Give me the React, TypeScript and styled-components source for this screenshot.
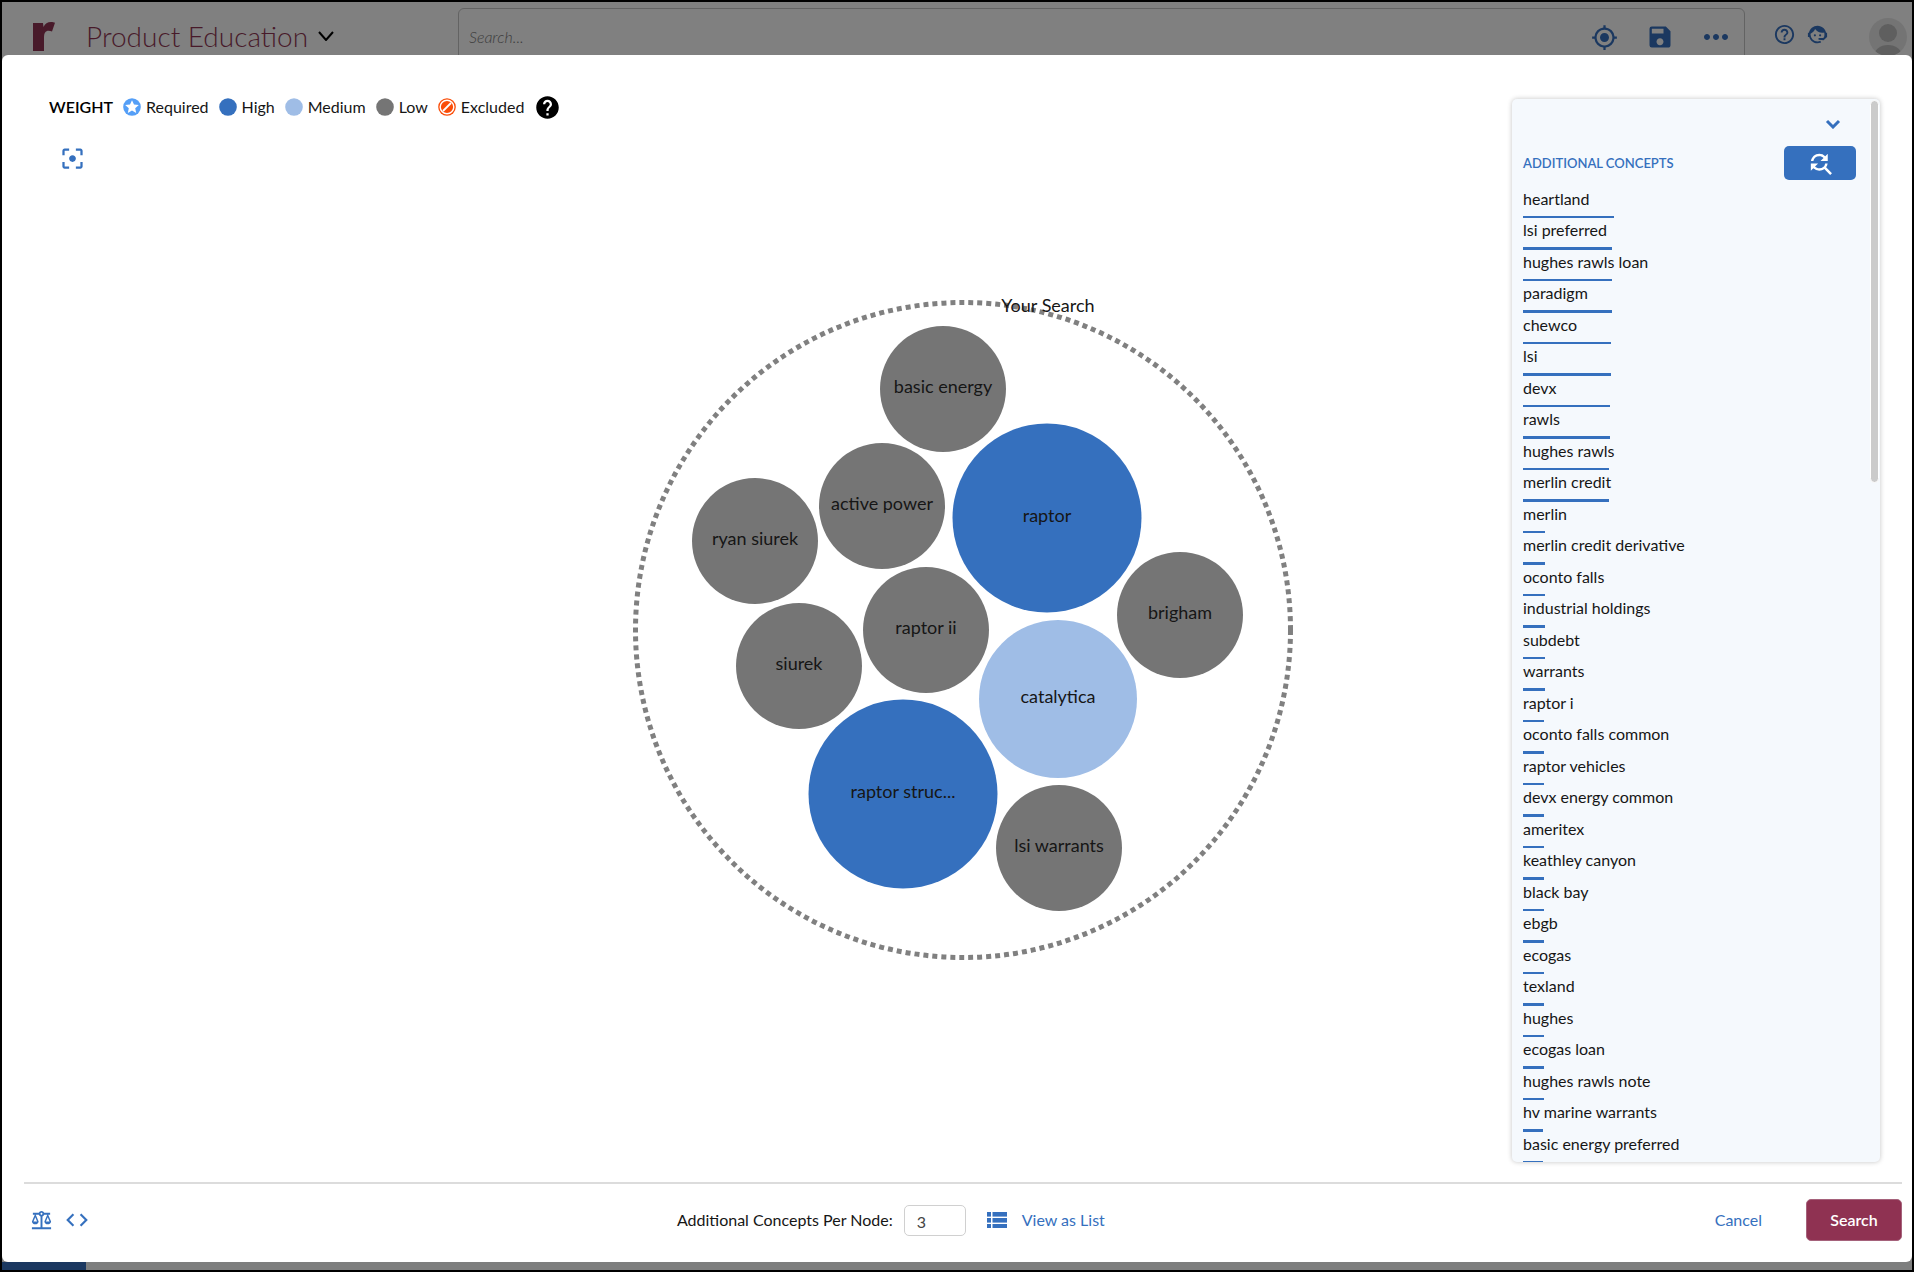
import React, { useState } from "react";
import styled, { createGlobalStyle } from "styled-components";
import {
  MdCode,
  MdFilterCenterFocus,
  MdFindReplace,
  MdHelp,
  MdHelpOutline,
  MdMoreHoriz,
  MdMyLocation,
  MdOutlineBalance,
  MdSave,
} from "react-icons/md";

const color = {
  blue: "#3570be",
  paleBlue: "#9fbde6",
  brightBlue: "#559ff7",
  gray: "#757575",
  orange: "#fa4d09",
  wine: "#8f3252",
  dimWine: "#481a2a",
  navy: "#1b3860",
  ink: "#161616",
};

const GlobalStyle = createGlobalStyle`
  *, *::before, *::after { box-sizing: border-box; }
  body {
    margin: 0;
    font-family: Lato, "Open Sans", sans-serif;
    font-size: 16px;
    line-height: 24px;
    color: ${color.ink};
  }
  button, input { font: inherit; }
`;

const Frame = styled.div`
  display: flex;
  flex-direction: column;
  height: 100vh;
  border: 2px solid #000;
  background: #808080;
  overflow: hidden;
`;

const PlainButton = styled.button`
  display: inline-flex;
  align-items: center;
  justify-content: center;
  padding: 0;
  border: 0;
  background: none;
  color: inherit;
  cursor: pointer;
`;

/* ---------- dimmed page header ---------- */

const Header = styled.header`
  display: flex;
  align-items: flex-start;
  flex: none;
  height: 53px;
  padding: 6px 5px 0 31px;
  overflow: hidden;
  color: ${color.navy};
`;

const Brand = styled.div`
  display: flex;
  align-items: center;
  gap: 31px;
  height: 57px;
  width: 425px;
`;

const TitleButton = styled(PlainButton)`
  gap: 10px;
  padding-bottom: 2px;
  font-size: 28px;
  line-height: 36px;
  font-weight: 300;
  color: ${color.dimWine};
`;

const SearchBox = styled.div`
  display: flex;
  align-items: center;
  flex: 1;
  height: 58px;
  padding: 0 10px;
  border: 1px solid #636363;
  border-radius: 6px;
`;

const SearchInput = styled.input`
  flex: 1;
  min-width: 0;
  padding: 0;
  border: 0;
  outline: 0;
  background: none;
  font-style: italic;
  font-weight: 300;
  &::placeholder {
    color: #3c3c3c;
    opacity: 1;
  }
`;

const SearchActions = styled.div`
  display: flex;
  align-items: center;
  gap: 20px;
`;

const SearchAction = styled(PlainButton)`
  width: 36px;
  height: 36px;
`;

const HeaderTools = styled.div`
  display: flex;
  align-items: center;
  gap: 10px;
  height: 53px;
  padding: 0 40px 0 28px;
`;

const Avatar = styled.div`
  margin-top: 10px;
  width: 38px;
  height: 38px;
  border-radius: 50%;
  background: #747474;
  overflow: hidden;
`;

/* ---------- dialog ---------- */

const Dialog = styled.section`
  display: flex;
  flex-direction: column;
  flex: 1;
  min-height: 0;
  border-radius: 6px;
  background: #fff;
`;

const DialogBody = styled.div`
  display: grid;
  grid-template: minmax(0, 1fr) / minmax(0, 1fr);
  flex: 1;
  min-height: 0;
  padding: 44px 32px 20px 47px;
  & > * {
    grid-area: 1 / 1;
  }
`;

const Toolbar = styled.div`
  display: flex;
  flex-direction: column;
  align-items: flex-start;
  gap: 23px;
  margin-top: -7px;
`;

const Legend = styled.div`
  display: flex;
  align-items: center;
  gap: 10px;
  height: 30px;
`;

const LegendTitle = styled.h2`
  margin: 0;
  font-size: 16px;
  line-height: 24px;
  font-weight: 600;
  color: #000;
`;

const LegendList = styled.ul`
  display: flex;
  gap: 10px;
  margin: 0;
  padding: 0;
  list-style: none;
`;

const LegendItem = styled.li`
  display: flex;
  align-items: center;
  gap: 5px;
`;

const HelpButton = styled(PlainButton)`
  color: #000;
`;

const FocusButton = styled(PlainButton)`
  margin-left: 10px;
  color: ${color.blue};
`;

const Diagram = styled.svg`
  place-self: center;
  font-size: 18px;
  fill: ${color.ink};
`;

/* ---------- concepts panel ---------- */

const Panel = styled.aside`
  justify-self: end;
  position: relative;
  width: 368px;
  min-height: 0;
  border-radius: 5px;
  background: #f5f9fd;
  box-shadow: 0 0 5px rgba(0, 0, 0, 0.24);
  overflow: hidden;
`;

const PanelScroll = styled.div`
  height: 100%;
  padding: 15px 24px 0 11px;
  overflow-y: auto;
  scrollbar-width: none;
`;

const PanelTop = styled.div`
  display: flex;
  justify-content: flex-end;
  padding-right: 11px;
`;

const CollapseButton = styled(PlainButton)`
  width: 24px;
  height: 20px;
  color: ${color.blue};
`;

const PanelHead = styled.div`
  display: flex;
  align-items: center;
  justify-content: space-between;
  margin: 12px 0 7px;
`;

const PanelTitle = styled.h3`
  margin: 0;
  font-size: 13px;
  line-height: 20px;
  font-weight: 600;
  color: ${color.blue};
`;

const RefreshButton = styled(PlainButton)`
  width: 72px;
  height: 34px;
  border-radius: 5px;
  background: ${color.blue};
  color: #fff;
`;

const ConceptList = styled.ul`
  margin: 0;
  padding: 0;
  list-style: none;
`;

const Bar = styled.div`
  height: 2px;
  background: ${color.blue};
`;

const Concept = styled.li`
  line-height: 24px;
  &:nth-child(even) ${Bar} {
    height: 3px;
  }
`;

const ConceptName = styled.div`
  padding-bottom: 5px;
`;

const ScrollThumb = styled.div`
  position: absolute;
  top: 1px;
  right: 1px;
  width: 9px;
  height: 36%;
  border: 1px solid #fff;
  border-radius: 5px;
  background: #cbcbcb;
`;

/* ---------- footer ---------- */

const Footer = styled.footer`
  display: flex;
  align-items: center;
  justify-content: space-between;
  flex: none;
  height: 80px;
  margin: 0 10px 0 22px;
  padding-bottom: 6px;
  border-top: 2px solid #dcdcdc;
`;

const FooterGroup = styled.div<{ $gap: number }>`
  display: flex;
  align-items: center;
  gap: ${(p) => p.$gap}px;
  color: ${color.blue};
`;

const IconButton = styled(PlainButton)`
  width: 35px;
  height: 36px;
`;

const CountLabel = styled.label`
  color: ${color.ink};
`;

const CountInput = styled.input`
  width: 62px;
  height: 31px;
  margin-right: 10px;
  padding: 2px 12px 0;
  border: 1px solid #d0d0d0;
  border-radius: 5px;
  color: #444;
`;

const LinkButton = styled(PlainButton)`
  gap: 15px;
`;

const CancelButton = styled(PlainButton)`
  height: 42px;
  padding: 0 27px;
`;

const SearchButton = styled(PlainButton)`
  width: 96px;
  height: 42px;
  border: 1px solid #a5627b;
  border-radius: 5px;
  background: ${color.wine};
  font-weight: 600;
  color: #fff;
`;

const BottomStrip = styled.div`
  flex: none;
  height: 8px;
  background: linear-gradient(to right, ${color.navy} 84px, #7d7e7e 84px);
`;

/* ---------- drawings ---------- */

const Logo = () => (
  <svg width="22" height="29" viewBox="0 0 22 29" fill={color.dimWine} aria-hidden="true">
    <path d="M0 1H10L10.500 5C12 1.500 14.500 0 18 0C19.500 0 21 0.400 22 0.800L19 9.500C17.500 9 15.500 8.500 14 9C12 9.700 11 11.500 11 15V29H0Z" />
  </svg>
);

const Chevron = ({ stroke, width }: { stroke: string; width: number }) => (
  <svg width="16" height="10" viewBox="0 0 16 10" fill="none" stroke={stroke} strokeWidth={width} aria-hidden="true">
    <path d={width > 2 ? "M2 2L8 8L14 2" : "M1 1L8 9L15 1"} />
  </svg>
);

const AgentFace = () => (
  <svg width="23" height="23" viewBox="0 0 24 24" fill="currentColor" aria-hidden="true">
    <path d="M18.720 14.760C19.070 13.910 19.260 13 19.260 12C19.260 11.280 19.150 10.590 18.960 9.950C18.310 10.100 17.630 10.180 16.920 10.180C13.860 10.180 11.150 8.670 9.500 6.340C8.610 8.500 6.910 10.260 4.770 11.220C4.730 11.470 4.730 11.740 4.730 12A7.270 7.270 0 0 0 12 19.270C13.050 19.270 14.060 19.040 14.970 18.630C15.540 19.720 15.800 20.260 15.780 20.260C14.140 20.810 12.870 21.080 12 21.080C9.580 21.080 7.270 20.130 5.570 18.420C4.530 17.380 3.760 16.110 3.330 14.730H2V10.180H3.090C3.930 6.040 7.600 2.920 12 2.920C14.400 2.920 16.710 3.870 18.420 5.580C19.690 6.840 20.540 8.450 20.890 10.180H22V14.730H21.940L18.380 18L13.080 17.400V15.730H17.910L18.720 14.760Z" />
    <circle cx="9.270" cy="12.910" r="1.140" />
    <circle cx="14.720" cy="12.910" r="1.140" />
  </svg>
);

const Dot = ({ fill, kind }: { fill: string; kind?: "star" | "ban" }) => (
  <svg width="18" height="18" viewBox="0 0 18 18" aria-hidden="true">
    <circle cx="9" cy="9" r="8.800" fill={fill} />
    {kind === "star" && (
      <path
        fill="#fff"
        d="M9 2.200L11 6.500L15.800 7L12.200 10.200L13.200 15L9 12.500L4.800 15L5.800 10.200L2.200 7L7 6.500Z"
      />
    )}
    {kind === "ban" && (
      <>
        <circle cx="9" cy="9" r="6.800" fill="none" stroke="#fff" strokeWidth="1.400" />
        <path d="M5 13L13 5" stroke="#fff" strokeWidth="1.800" />
      </>
    )}
  </svg>
);

const ListIcon = () => (
  <svg width="20" height="16" viewBox="0 0 20 16" fill="currentColor" aria-hidden="true">
    {[0, 6, 12].map((y) => (
      <React.Fragment key={y}>
        <rect x="0" y={y} width="4" height="4.600" />
        <rect x="5.500" y={y} width="14.500" height="4.600" />
      </React.Fragment>
    ))}
  </svg>
);

/* ---------- data ---------- */

const legend: { name: string; fill: string; kind?: "star" | "ban" }[] = [
  { name: "Required", fill: color.brightBlue, kind: "star" },
  { name: "High", fill: color.blue },
  { name: "Medium", fill: color.paleBlue },
  { name: "Low", fill: color.gray },
  { name: "Excluded", fill: color.orange, kind: "ban" },
];

const weights = {
  high: { r: 94.5, fill: color.blue },
  medium: { r: 79, fill: color.paleBlue },
  low: { r: 63, fill: color.gray },
};

const nodes: { name: string; x: number; y: number; weight: keyof typeof weights }[] = [
  { name: "basic energy", x: -21, y: -241, weight: "low" },
  { name: "raptor", x: 83, y: -112, weight: "high" },
  { name: "active power", x: -82, y: -124, weight: "low" },
  { name: "ryan siurek", x: -209, y: -89, weight: "low" },
  { name: "raptor ii", x: -38, y: 0, weight: "low" },
  { name: "siurek", x: -165, y: 36, weight: "low" },
  { name: "brigham", x: 216, y: -15, weight: "low" },
  { name: "catalytica", x: 94, y: 69, weight: "medium" },
  { name: "raptor struc...", x: -61, y: 164, weight: "high" },
  { name: "lsi warrants", x: 95, y: 218, weight: "low" },
];

const concepts: [string, number][] = [
  ["heartland", 91],
  ["lsi preferred", 89],
  ["hughes rawls loan", 89],
  ["paradigm", 89],
  ["chewco", 88],
  ["lsi", 88],
  ["devx", 87],
  ["rawls", 87],
  ["hughes rawls", 86],
  ["merlin credit", 86],
  ["merlin", 22],
  ["merlin credit derivative", 22],
  ["oconto falls", 22],
  ["industrial holdings", 22],
  ["subdebt", 22],
  ["warrants", 22],
  ["raptor i", 21],
  ["oconto falls common", 21],
  ["raptor vehicles", 21],
  ["devx energy common", 21],
  ["ameritex", 21],
  ["keathley canyon", 21],
  ["black bay", 21],
  ["ebgb", 21],
  ["ecogas", 21],
  ["texland", 21],
  ["hughes", 21],
  ["ecogas loan", 21],
  ["hughes rawls note", 21],
  ["hv marine warrants", 20],
  ["basic energy preferred", 20],
];

export default function App() {
  const [count, setCount] = useState("3");

  return (
    <>
      <GlobalStyle />
      <Frame>
        <Header>
          <Brand>
            <Logo />
            <TitleButton type="button">
              Product Education
              <Chevron stroke="#000" width={2} />
            </TitleButton>
          </Brand>
          <SearchBox>
            <SearchInput type="text" aria-label="Search" placeholder="Search..." />
            <SearchActions>
              <SearchAction type="button" aria-label="Locate">
                <MdMyLocation size={27} />
              </SearchAction>
              <SearchAction type="button" aria-label="Save">
                <MdSave size={28} />
              </SearchAction>
              <SearchAction type="button" aria-label="More">
                <MdMoreHoriz size={36} />
              </SearchAction>
            </SearchActions>
          </SearchBox>
          <HeaderTools>
            <PlainButton type="button" aria-label="Help">
              <MdHelpOutline size={23} />
            </PlainButton>
            <PlainButton type="button" aria-label="Support">
              <AgentFace />
            </PlainButton>
          </HeaderTools>
          <Avatar>
            <svg width="38" height="38" viewBox="0 0 38 38" fill="#5f5f5f" aria-hidden="true">
              <circle cx="19" cy="15" r="9" />
              <ellipse cx="19" cy="38" rx="14" ry="11" />
            </svg>
          </Avatar>
        </Header>

        <Dialog role="dialog" aria-label="Concept search">
          <DialogBody>
            <Diagram width="700" height="701" viewBox="-349 -350 700 701" role="img" aria-label="Your Search">
              <circle r="327.500" cx="-1" fill="none" stroke="#808080" strokeWidth="5" strokeDasharray="5 4" />
              {nodes.map((node) => (
                <g key={node.name}>
                  <circle cx={node.x} cy={node.y} r={weights[node.weight].r} fill={weights[node.weight].fill} />
                  <text x={node.x} y={node.y + 4} textAnchor="middle">
                    {node.name}
                  </text>
                </g>
              ))}
              <text x="84" y="-318" textAnchor="middle">
                Your Search
              </text>
            </Diagram>

            <Toolbar>
              <Legend>
                <LegendTitle>WEIGHT</LegendTitle>
                <LegendList>
                  {legend.map((item) => (
                    <LegendItem key={item.name}>
                      <Dot fill={item.fill} kind={item.kind} />
                      {item.name}
                    </LegendItem>
                  ))}
                </LegendList>
                <HelpButton type="button" aria-label="About weights">
                  <MdHelp size={27} />
                </HelpButton>
              </Legend>
              <FocusButton type="button" aria-label="Center diagram">
                <MdFilterCenterFocus size={27} />
              </FocusButton>
            </Toolbar>

            <Panel>
              <PanelScroll>
                <PanelTop>
                  <CollapseButton type="button" aria-label="Collapse">
                    <Chevron stroke={color.blue} width={3} />
                  </CollapseButton>
                </PanelTop>
                <PanelHead>
                  <PanelTitle>ADDITIONAL CONCEPTS</PanelTitle>
                  <RefreshButton type="button" aria-label="Refresh concepts">
                    <MdFindReplace size={29} />
                  </RefreshButton>
                </PanelHead>
                <ConceptList>
                  {concepts.map(([name, width]) => (
                    <Concept key={name}>
                      <ConceptName>{name}</ConceptName>
                      <Bar style={{ width }} />
                    </Concept>
                  ))}
                </ConceptList>
              </PanelScroll>
              <ScrollThumb />
            </Panel>
          </DialogBody>

          <Footer>
            <FooterGroup $gap={0}>
              <IconButton type="button" aria-label="Balance weights">
                <MdOutlineBalance size={23} />
              </IconButton>
              <IconButton type="button" aria-label="Show code">
                <MdCode size={26} />
              </IconButton>
            </FooterGroup>
            <FooterGroup $gap={11}>
              <CountLabel htmlFor="per-node">Additional Concepts Per Node:</CountLabel>
              <CountInput id="per-node" type="text" value={count} onChange={(e) => setCount(e.target.value)} />
              <LinkButton type="button">
                <ListIcon />
                View as List
              </LinkButton>
            </FooterGroup>
            <FooterGroup $gap={17}>
              <CancelButton type="button">Cancel</CancelButton>
              <SearchButton type="button">Search</SearchButton>
            </FooterGroup>
          </Footer>
        </Dialog>
        <BottomStrip />
      </Frame>
    </>
  );
}
